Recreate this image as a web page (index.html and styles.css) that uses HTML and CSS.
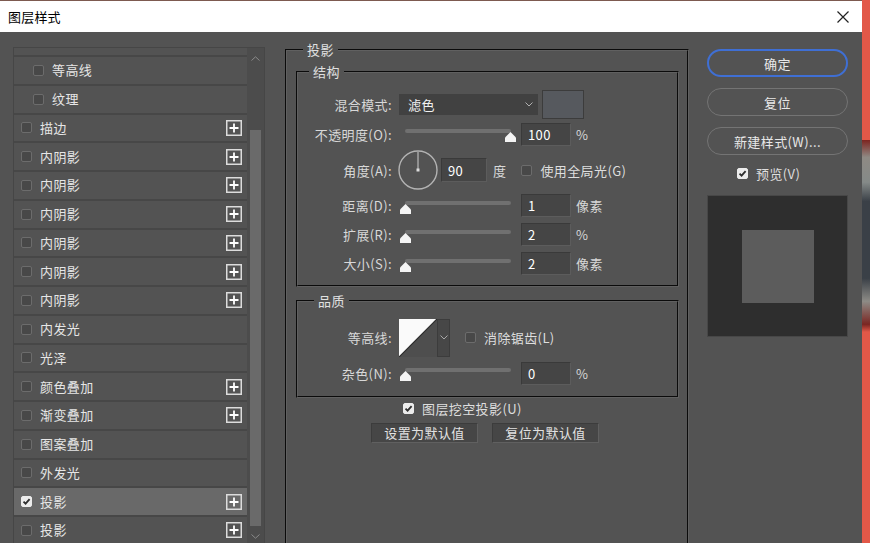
FILE: index.html
```html
<!DOCTYPE html>
<html lang="zh-CN">
<head>
<meta charset="utf-8">
<title>图层样式</title>
<link rel="stylesheet" href="styles.css">
</head>
<body>
<div class="screen">
  <div class="dialog">
    <div class="titlebar">
      <span class="title">图层样式</span>
      <svg class="close" width="12" height="12" viewBox="0 0 12 12"><path d="M0.5 0.5 L11.5 11.5 M11.5 0.5 L0.5 11.5" stroke="#222" stroke-width="1.2" fill="none"/></svg>
    </div>
    <div class="body">
      <div class="left">
        <div class="listbox">
          <div class="list">
            <div class="row stub"></div>
            <div class="row sub"><span class="cb"></span><span class="name">等高线</span></div>
            <div class="row sub"><span class="cb"></span><span class="name">纹理</span></div>
            <div class="row"><span class="cb"></span><span class="name">描边</span><svg class="plus" width="16" height="16" viewBox="0 0 16 16"><rect x="0.75" y="0.75" width="14.5" height="14.5" fill="none" stroke="#dcdcdc" stroke-width="1.5"/><path d="M8 3.5 V12.5 M3.5 8 H12.5" stroke="#fff" stroke-width="1.8"/></svg></div>
            <div class="row"><span class="cb"></span><span class="name">内阴影</span><svg class="plus" width="16" height="16" viewBox="0 0 16 16"><rect x="0.75" y="0.75" width="14.5" height="14.5" fill="none" stroke="#dcdcdc" stroke-width="1.5"/><path d="M8 3.5 V12.5 M3.5 8 H12.5" stroke="#fff" stroke-width="1.8"/></svg></div>
            <div class="row"><span class="cb"></span><span class="name">内阴影</span><svg class="plus" width="16" height="16" viewBox="0 0 16 16"><rect x="0.75" y="0.75" width="14.5" height="14.5" fill="none" stroke="#dcdcdc" stroke-width="1.5"/><path d="M8 3.5 V12.5 M3.5 8 H12.5" stroke="#fff" stroke-width="1.8"/></svg></div>
            <div class="row"><span class="cb"></span><span class="name">内阴影</span><svg class="plus" width="16" height="16" viewBox="0 0 16 16"><rect x="0.75" y="0.75" width="14.5" height="14.5" fill="none" stroke="#dcdcdc" stroke-width="1.5"/><path d="M8 3.5 V12.5 M3.5 8 H12.5" stroke="#fff" stroke-width="1.8"/></svg></div>
            <div class="row"><span class="cb"></span><span class="name">内阴影</span><svg class="plus" width="16" height="16" viewBox="0 0 16 16"><rect x="0.75" y="0.75" width="14.5" height="14.5" fill="none" stroke="#dcdcdc" stroke-width="1.5"/><path d="M8 3.5 V12.5 M3.5 8 H12.5" stroke="#fff" stroke-width="1.8"/></svg></div>
            <div class="row"><span class="cb"></span><span class="name">内阴影</span><svg class="plus" width="16" height="16" viewBox="0 0 16 16"><rect x="0.75" y="0.75" width="14.5" height="14.5" fill="none" stroke="#dcdcdc" stroke-width="1.5"/><path d="M8 3.5 V12.5 M3.5 8 H12.5" stroke="#fff" stroke-width="1.8"/></svg></div>
            <div class="row"><span class="cb"></span><span class="name">内阴影</span><svg class="plus" width="16" height="16" viewBox="0 0 16 16"><rect x="0.75" y="0.75" width="14.5" height="14.5" fill="none" stroke="#dcdcdc" stroke-width="1.5"/><path d="M8 3.5 V12.5 M3.5 8 H12.5" stroke="#fff" stroke-width="1.8"/></svg></div>
            <div class="row"><span class="cb"></span><span class="name">内发光</span></div>
            <div class="row"><span class="cb"></span><span class="name">光泽</span></div>
            <div class="row"><span class="cb"></span><span class="name">颜色叠加</span><svg class="plus" width="16" height="16" viewBox="0 0 16 16"><rect x="0.75" y="0.75" width="14.5" height="14.5" fill="none" stroke="#dcdcdc" stroke-width="1.5"/><path d="M8 3.5 V12.5 M3.5 8 H12.5" stroke="#fff" stroke-width="1.8"/></svg></div>
            <div class="row"><span class="cb"></span><span class="name">渐变叠加</span><svg class="plus" width="16" height="16" viewBox="0 0 16 16"><rect x="0.75" y="0.75" width="14.5" height="14.5" fill="none" stroke="#dcdcdc" stroke-width="1.5"/><path d="M8 3.5 V12.5 M3.5 8 H12.5" stroke="#fff" stroke-width="1.8"/></svg></div>
            <div class="row"><span class="cb"></span><span class="name">图案叠加</span></div>
            <div class="row"><span class="cb"></span><span class="name">外发光</span></div>
            <div class="row sel"><span class="cb on"><svg width="9" height="9" viewBox="0 0 9 9"><path d="M1.5 4.6 L3.6 6.7 L7.6 2.2" stroke="#2e2e2e" stroke-width="1.8" fill="none"/></svg></span><span class="name">投影</span><svg class="plus" width="16" height="16" viewBox="0 0 16 16"><rect x="0.75" y="0.75" width="14.5" height="14.5" fill="none" stroke="#dcdcdc" stroke-width="1.5"/><path d="M8 3.5 V12.5 M3.5 8 H12.5" stroke="#fff" stroke-width="1.8"/></svg></div>
            <div class="row"><span class="cb"></span><span class="name">投影</span><svg class="plus" width="16" height="16" viewBox="0 0 16 16"><rect x="0.75" y="0.75" width="14.5" height="14.5" fill="none" stroke="#dcdcdc" stroke-width="1.5"/><path d="M8 3.5 V12.5 M3.5 8 H12.5" stroke="#fff" stroke-width="1.8"/></svg></div>
          </div>
          <div class="scroll">
            <div class="arrow"><svg width="9" height="5" viewBox="0 0 9 5"><path d="M0.5 4.5 L4.5 0.8 L8.5 4.5" stroke="#8a8a8a" stroke-width="1" fill="none"/></svg></div>
            <div class="sthumb"></div>
            <div class="arrow"><svg width="9" height="5" viewBox="0 0 9 5"><path d="M0.5 0.5 L4.5 4.2 L8.5 0.5" stroke="#8a8a8a" stroke-width="1" fill="none"/></svg></div>
          </div>
        </div>
      </div>

      <div class="middle">
        <fieldset class="group outer">
          <legend>投影</legend>
          <fieldset class="group struct">
            <legend>结构</legend>
            <div class="frow h30">
              <span class="lbl">混合模式:</span>
              <div class="select"><span>滤色</span><svg width="8" height="5" viewBox="0 0 8 5"><path d="M0.5 0.5 L4 4 L7.5 0.5" stroke="#b0b0b0" stroke-width="1" fill="none"/></svg></div>
              <div class="swatch"></div>
            </div>
            <div class="frow h30">
              <span class="lbl">不透明度(O):</span>
              <div class="slider"><div class="track"></div><div class="thumb max"></div></div>
              <div class="num">100</div>
              <span class="unit">%</span>
            </div>
            <div class="frow h42">
              <span class="lbl">角度(A):</span>
              <svg class="dial" width="40" height="40" viewBox="0 0 40 40"><circle cx="20" cy="20" r="19" fill="none" stroke="#b3b3b3" stroke-width="1.4"/><path d="M20 2 V19" stroke="#cfcfcf" stroke-width="1"/><rect x="18.5" y="18.5" width="3" height="3" fill="#dcdcdc"/></svg>
              <div class="num angle">90</div>
              <span class="unit deg">度</span>
              <span class="cb gl"></span>
              <span class="cbtext">使用全局光(G)</span>
            </div>
            <div class="frow h29">
              <span class="lbl">距离(D):</span>
              <div class="slider"><div class="track"></div><div class="thumb min"></div></div>
              <div class="num">1</div>
              <span class="unit">像素</span>
            </div>
            <div class="frow h29">
              <span class="lbl">扩展(R):</span>
              <div class="slider"><div class="track"></div><div class="thumb min"></div></div>
              <div class="num">2</div>
              <span class="unit">%</span>
            </div>
            <div class="frow h29">
              <span class="lbl">大小(S):</span>
              <div class="slider"><div class="track"></div><div class="thumb min"></div></div>
              <div class="num">2</div>
              <span class="unit">像素</span>
            </div>
          </fieldset>

          <fieldset class="group quality">
            <legend>品质</legend>
            <div class="frow h41">
              <span class="lbl">等高线:</span>
              <svg class="contour" width="38" height="38" viewBox="0 0 38 38"><rect width="38" height="38" fill="#4e4e4e"/><polygon points="0,0 38,0 0,38" fill="#fafafa"/><path d="M38 0 L0 38" stroke="#2a2a2a" stroke-width="1.2"/></svg>
              <div class="cdrop"><svg width="8" height="5" viewBox="0 0 8 5"><path d="M0.5 0.5 L4 4 L7.5 0.5" stroke="#a8a8a8" stroke-width="1" fill="none"/></svg></div>
              <span class="cb aa"></span>
              <span class="cbtext">消除锯齿(L)</span>
            </div>
            <div class="frow h30">
              <span class="lbl">杂色(N):</span>
              <div class="slider"><div class="track"></div><div class="thumb min"></div></div>
              <div class="num">0</div>
              <span class="unit">%</span>
            </div>
          </fieldset>

          <div class="knock">
            <span class="cb on"><svg width="9" height="9" viewBox="0 0 9 9"><path d="M1.5 4.6 L3.6 6.7 L7.6 2.2" stroke="#2e2e2e" stroke-width="1.8" fill="none"/></svg></span>
            <span class="cbtext">图层挖空投影(U)</span>
          </div>
          <div class="defaults">
            <div class="dbtn">设置为默认值</div>
            <div class="dbtn">复位为默认值</div>
          </div>
        </fieldset>
      </div>

      <div class="right">
        <div class="pill primary">确定</div>
        <div class="pill">复位</div>
        <div class="pill">新建样式(W)...</div>
        <div class="preview-row">
          <span class="cb on"><svg width="9" height="9" viewBox="0 0 9 9"><path d="M1.5 4.6 L3.6 6.7 L7.6 2.2" stroke="#2e2e2e" stroke-width="1.8" fill="none"/></svg></span>
          <span class="cbtext">预览(V)</span>
        </div>
        <div class="preview"><div class="preview-square"></div></div>
      </div>
    </div>
  </div>
  <div class="backdrop"><div class="backdrop-img"></div></div>
</div>
</body>
</html>
```
FILE: styles.css
```css
* { box-sizing: border-box; }
html, body { margin: 0; padding: 0; }
body {
  width: 870px;
  height: 543px;
  overflow: hidden;
  background: #e25848;
  font-family: "Noto Sans CJK SC", "Noto Sans", sans-serif;
  font-size: 13px;
  letter-spacing: 0.4px;
  color: #dcdcdc;
}
.screen { display: flex; width: 870px; height: 543px; }
.dialog {
  width: 862px;
  height: 543px;
  display: flex;
  flex-direction: column;
  background: #535353;
  border-top: 1px solid #7d5a50;
}
.titlebar {
  height: 31px;
  flex: none;
  background: #fff;
  display: flex;
  align-items: center;
  padding: 0 13px 0 8px;
  color: #000;
  font-size: 13px;
  letter-spacing: 0.2px;
}
.title { flex: 1; }
.close { display: block; }
.body { flex: 1; display: flex; overflow: hidden; }

/* left list */
.left { width: 270px; flex: none; padding: 15px 0 0 13px; }
.listbox {
  width: 252px;
  height: 520px;
  border: 1px solid #464646;
  border-bottom: none;
  display: flex;
}
.list { flex: 1; }
.row {
  height: 28.75px;
  border-bottom: 2px solid #474747;
  display: flex;
  align-items: center;
  padding-left: 7px;
}
.row.stub { height: 9px; }
.row.sub { padding-left: 19px; }
.row.sel { background: #696969; }
.name { margin-left: 8px; color: #e6e6e6; line-height: 16px; }
.plus { margin-left: auto; margin-right: 5px; display: block; }

.cb {
  width: 11px;
  height: 11px;
  flex: none;
  border: 1px solid #6c6c6c;
  border-radius: 2px;
  background: #484848;
  display: flex;
  align-items: center;
  justify-content: center;
}
.cb.on { background: #ececec; border-color: #ececec; }
.cb svg { display: block; }

.scroll {
  width: 17px;
  flex: none;
  background: #4c4c4c;
  display: flex;
  flex-direction: column;
  align-items: center;
}
.arrow { height: 20px; display: flex; align-items: center; justify-content: center; }
.sthumb { width: 11px; height: 396px; margin-top: 62px; background: #6a6a6a; }

/* middle */
.middle { width: 428px; flex: none; }
.group {
  border: 2px groove #606060;
  margin: 0;
  min-width: 0;
}
.group > legend {
  padding: 0 4px;
  line-height: 14px;
  color: #e0e0e0;
}
.outer {
  width: 404px;
  height: 520px;
  margin: 11px 0 0 15px;
  padding: 0 8px 0 9px;
}
.outer > legend { margin-left: 7px; }
.struct { width: 383px; margin-top: 8px; padding: 10px 0 7px; }
.struct > legend { margin-left: 11px; }
.quality { width: 383px; margin-top: 7px; padding: 9px 0 8px; }
.quality > legend { margin-left: 16px; }

.frow { display: flex; align-items: center; }
.h30 { height: 30px; }
.h29 { height: 29px; }
.h42 { height: 42px; }
.h41 { height: 41px; }
.lbl {
  width: 94px;
  flex: none;
  text-align: right;
  margin-right: 7px;
  color: #d8d8d8;
}
.select {
  width: 139px;
  height: 21px;
  background: #414141;
  display: flex;
  align-items: center;
  justify-content: space-between;
  padding: 0 5px 0 9px;
  color: #f2f2f2;
}
.select svg { display: block; }
.swatch {
  width: 42px;
  height: 29px;
  margin-left: 4px;
  background: #56595e;
  border: 1px solid #3c3c3c;
}
.slider { position: relative; width: 122px; height: 100%; flex: none; }
.track {
  position: absolute;
  left: 6px;
  top: 10px;
  width: 106px;
  height: 4px;
  background: #707070;
  border-radius: 2px;
}
.thumb {
  position: absolute;
  top: 13px;
  width: 11px;
  height: 10px;
  background: #f4f4f4;
  clip-path: polygon(50% 0, 100% 55%, 100% 100%, 0 100%, 0 55%);
}
.thumb.min { left: 1px; }
.thumb.max { left: 106px; }
.num {
  width: 50px;
  height: 23px;
  flex: none;
  background: #454545;
  border: 1px solid;
  border-color: #3a3a3a #5c5c5c #5c5c5c #3a3a3a;
  color: #fff;
  padding-left: 6px;
  display: flex;
  align-items: center;
}
.unit { margin-left: 5px; color: #d8d8d8; }
.dial { display: block; margin-left: -1px; flex: none; }
.num.angle { width: 46px; height: 24px; margin-left: 3px; }
.unit.deg { margin-left: 6px; }
.cb.gl { margin-left: 15px; }
.cbtext { margin-left: 8px; color: #dedede; }
.contour { display: block; flex: none; }
.cdrop {
  width: 13px;
  height: 38px;
  background: #474747;
  border: 1px solid #3c3c3c;
  display: flex;
  align-items: center;
  justify-content: center;
}
.cdrop svg { display: block; }
.cb.aa { margin-left: 15px; }

.knock {
  height: 20px;
  display: flex;
  align-items: center;
  padding-left: 107px;
}
.defaults {
  display: flex;
  gap: 14px;
  margin-top: 5px;
  padding-left: 75px;
}
.dbtn {
  width: 107px;
  height: 20px;
  background: #464646;
  border: 1px solid;
  border-color: #3c3c3c #606060 #606060 #3c3c3c;
  color: #e2e2e2;
  display: flex;
  align-items: center;
  justify-content: center;
  line-height: 16px;
}

/* right */
.right { width: 164px; flex: none; padding: 17px 0 0 9px; }
.pill {
  width: 141px;
  height: 28px;
  border: 1px solid #747474;
  border-radius: 14px;
  display: flex;
  align-items: center;
  justify-content: center;
  color: #e8e8e8;
  margin-bottom: 11px;
}
.pill.primary { border: 2px solid #3f6fd4; }
.preview-row { height: 14px; display: flex; align-items: center; padding-left: 30px; }
.preview {
  width: 141px;
  height: 142px;
  margin-top: 15px;
  background: #2e2e2e;
  border: 1px solid #474747;
  display: flex;
  align-items: center;
  justify-content: center;
}
.preview-square { width: 72px; height: 73px; background: #5c5c5c; }

/* backdrop strip */
.backdrop { flex: 1; background: #e25848; }
.backdrop-img {
  margin-top: 140px;
  height: 192px;
  background: linear-gradient(180deg, #7d2420 0%, #8f8a84 9%, #858a88 22%, #3a4047 32%, #3a4047 72%, #8d8b86 84%, #7a2622 96%, #e25848 100%);
}
```
